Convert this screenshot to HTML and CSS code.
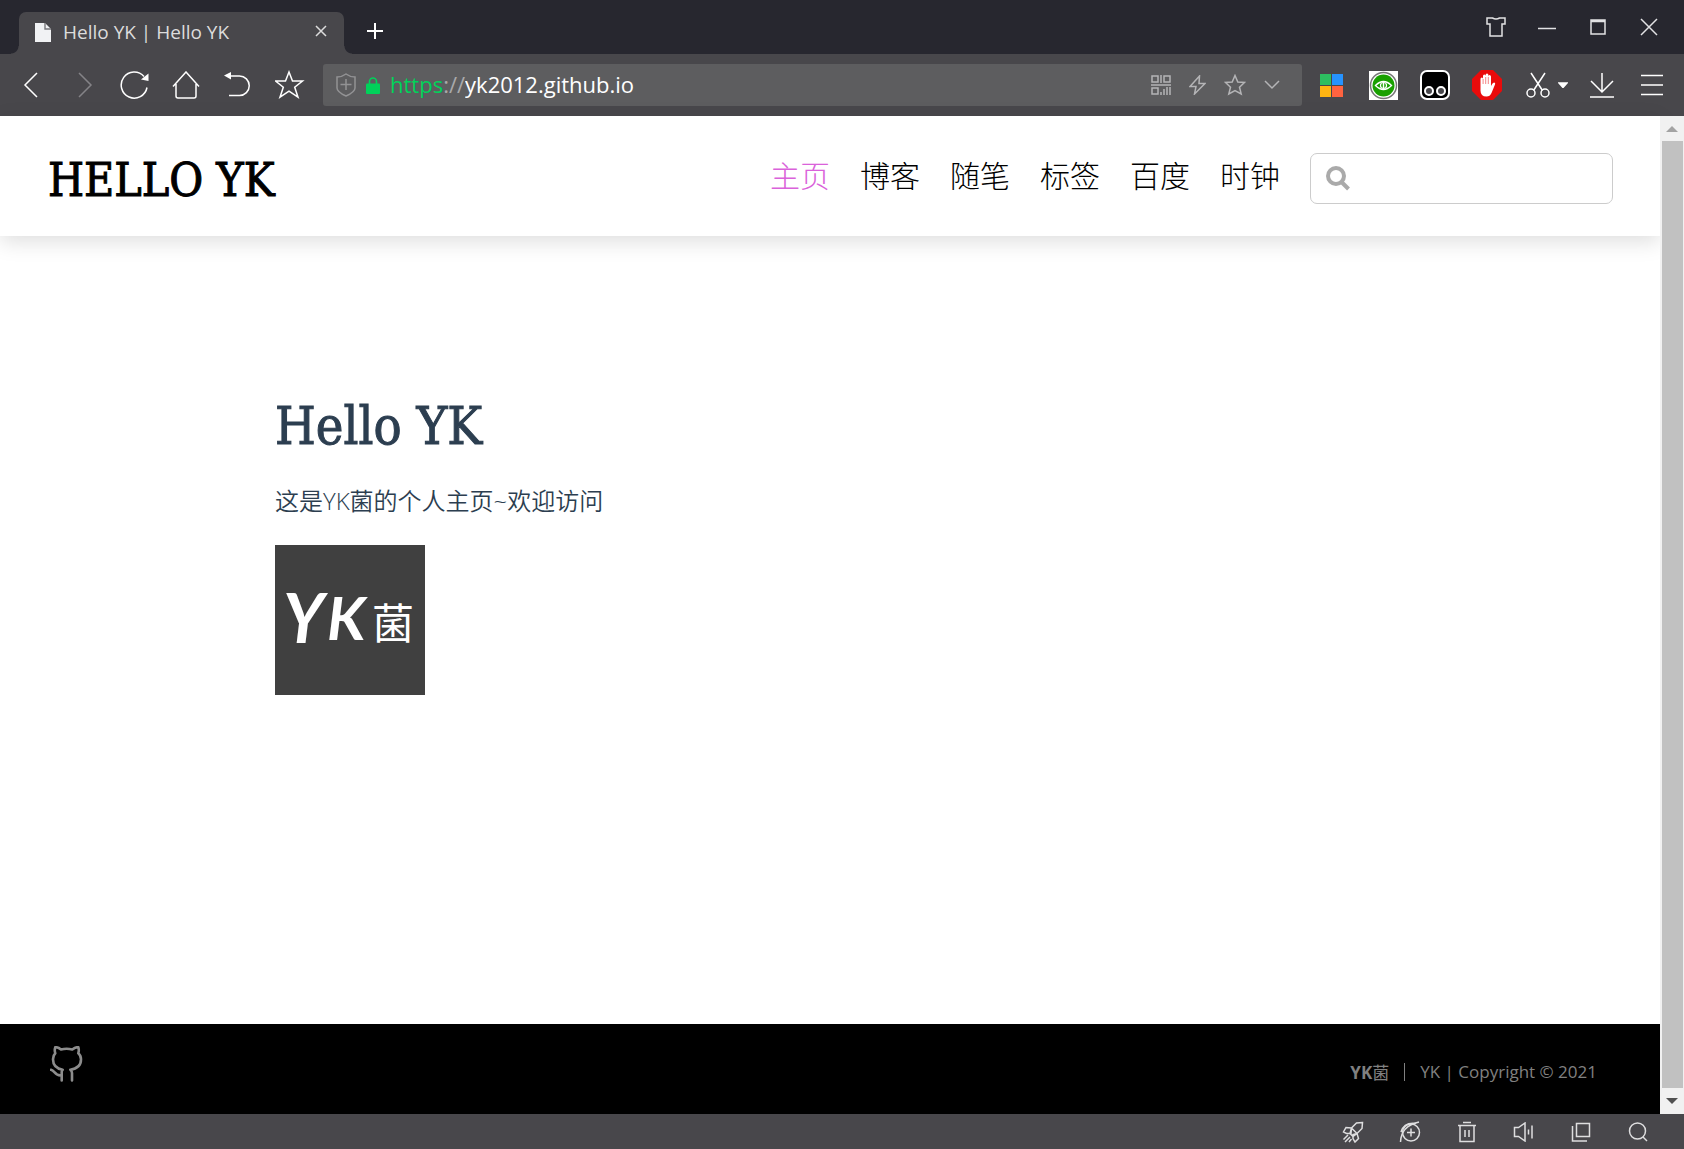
FILE: index.html
```html
<!DOCTYPE html>
<html lang="zh-CN">

<head>
    <meta charset="UTF-8">
    <meta name="viewport" content="width=device-width, initial-scale=1.0">
    <title>Hello YK | Hello YK</title>
    <link rel="stylesheet" href="styles.css">
</head>

<body>
    <!-- tab strip -->
    <div class="titlebar">
        <div class="tab">
            <svg class="tab-icon" width="16" height="20" viewBox="0 0 16 20">
                <path d="M0 0h10l6 6v13H0z" fill="#f1f2f4" />
                <path d="M10 0v6h6" fill="none" stroke="#77777b" stroke-width="1.4" />
            </svg>
            <span class="tab-title">Hello YK | Hello YK</span>
            <button class="tab-close" aria-label="Close tab">
                <svg width="12" height="12" viewBox="0 0 12 12"><path d="M1 1l10 10M11 1L1 11" /></svg>
            </button>
        </div>
        <button class="new-tab" aria-label="New tab">
            <svg width="18" height="18" viewBox="0 0 18 18"><path d="M9 1v16M1 9h16" stroke-width="2" /></svg>
        </button>
        <div class="window-btns">
            <button aria-label="Skin">
                <svg width="20" height="20" viewBox="0 0 20 20"><path d="M1 1h5.500q3.500 2 7 0H19v6h-3v12H4V7H1z" /></svg>
            </button>
            <button aria-label="Minimize">
                <svg width="18" height="18" viewBox="0 0 18 18"><path d="M0 10.500h18" /></svg>
            </button>
            <button aria-label="Maximize">
                <svg width="16" height="16" viewBox="0 0 16 16"><path d="M1 1h14v14H1zM1 2.500h14" /></svg>
            </button>
            <button aria-label="Close">
                <svg width="18" height="18" viewBox="0 0 18 18"><path d="M1 1l16 16M17 1L1 17" /></svg>
            </button>
        </div>
    </div>

    <!-- toolbar -->
    <div class="toolbar">
        <div class="nav-btns">
            <button aria-label="Back">
                <svg width="28" height="28" viewBox="0 0 28 28"><path d="M21 2L9 14l12 12" /></svg>
            </button>
            <button class="off" aria-label="Forward" disabled>
                <svg width="28" height="28" viewBox="0 0 28 28"><path d="M11 2l12 12-12 12" /></svg>
            </button>
            <button aria-label="Reload">
                <svg width="30" height="30" viewBox="0 0 30 30">
                    <path d="M28 17.500A13 13 0 1 1 25 6.500" />
                    <path d="M29.500 11V3.500L22 9.500z" fill="#fff" stroke="none" />
                </svg>
            </button>
            <button aria-label="Home">
                <svg width="28" height="28" viewBox="0 0 28 28"><path d="M1 15.500L14 1l13 14.500M4 13v12q0 2 2 2h16q2 0 2-2V13" /></svg>
            </button>
            <button aria-label="Undo">
                <svg width="28" height="28" viewBox="0 0 28 28">
                    <path d="M4 5h11.500a9.700 9.700 0 0 1 0 19.500H5" />
                    <path d="M0 4.500L7 1v7.500z" fill="#fff" stroke="none" />
                </svg>
            </button>
            <button aria-label="Favorites">
                <svg width="30" height="30" viewBox="0 0 30 30"><path d="M14 2l3.500 9h10L19.700 17.200l3.300 10-9-6-9 6 3.300-10L.5 11h10z" /></svg>
            </button>
        </div>

        <div class="urlbar">
            <svg class="shield" width="20" height="24" viewBox="0 0 20 24">
                <path d="M1 4q5 0 9-3 4 3 9 3v11q0 4-9 8-9-4-9-8zM10 6v11M4.500 11.500h11" />
            </svg>
            <svg class="lock" width="14" height="17" viewBox="0 0 14 17">
                <path d="M3.500 8V4.500a3.500 3.500 0 0 1 7 0V8" fill="none" stroke="#00d25a" stroke-width="1.600" />
                <rect y="6.500" width="14" height="10.500" rx="1" fill="#00d25a" />
            </svg>
            <label class="url-scheme" for="url"><b>https</b>://</label>
            <input id="url" class="url-input" type="text" value="yk2012.github.io">
            <button aria-label="QR code">
                <svg width="20" height="20" viewBox="0 0 20 20">
                    <path d="M1 1h6v6H1zM13 1h6v6h-6zM10 0v8M0 10h20M1 13h6v6H1zM10 17v3M13 14v6M16 12v8M19 12v8" />
                </svg>
            </button>
            <button aria-label="Speed mode">
                <svg width="17" height="20" viewBox="0 0 17 20"><path d="M10.500 1L1 11.500h6L5.500 19 16 8.500h-6z" /></svg>
            </button>
            <button aria-label="Add to favorites">
                <svg width="22" height="22" viewBox="0 0 22 22"><path d="M11 1.500l2.800 6.500 6.700.5-5 4.700 1.700 6.800-6.200-3.500L4.800 20l1.700-6.800-5-4.700 6.700-.5z" /></svg>
            </button>
            <button aria-label="Show history">
                <svg width="16" height="10" viewBox="0 0 16 10"><path d="M1 1l7 7 7-7" /></svg>
            </button>
        </div>

        <div class="extensions">
            <button aria-label="Microsoft">
                <svg width="23" height="23" viewBox="0 0 23 23">
                    <g stroke="none">
                        <path d="M0 0h11v11H0z" fill="#2dbe60" />
                        <path d="M12 0h11v11H12z" fill="#2693ff" />
                        <path d="M0 12h11v11H0z" fill="#ffb412" />
                        <path d="M12 12h11v11H12z" fill="#ff6340" />
                    </g>
                </svg>
            </button>
            <button aria-label="Eye care">
                <svg width="29" height="29" viewBox="0 0 29 29">
                    <path d="M0 0h29v29H0z" fill="#fff" stroke="none" />
                    <circle cx="14.500" cy="14.500" r="13" fill="#fff" stroke="#777" />
                    <circle cx="14.500" cy="14.500" r="11" fill="#19a000" stroke="none" />
                    <path d="M6.500 14.500q8-8 16 0-8 8-16 0z" stroke-width="1.400" />
                    <circle cx="14.500" cy="14.500" r="3" stroke-width="1.200" />
                    <path d="M14.500 12v5" />
                </svg>
            </button>
            <button aria-label="Tampermonkey">
                <svg width="30" height="30" viewBox="0 0 30 30">
                    <rect x="1" y="1" width="28" height="28" rx="6" fill="#000" stroke-width="2" />
                    <circle cx="9" cy="21" r="4" fill="#48474b" stroke-width="2" />
                    <circle cx="21" cy="21" r="4" fill="#48474b" stroke-width="2" />
                </svg>
            </button>
            <button aria-label="AdBlock">
                <svg width="30" height="30" viewBox="0 0 30 30">
                    <path d="M9 0h12l9 9v12l-9 9H9l-9-9V9z" fill="#e90b0b" stroke="none" />
                    <path d="M8.500 17V9q0-1.500 1.300-1.500T11 9V6q0-1.500 1.300-1.500T13.600 6V5q0-1.500 1.400-1.500T16.400 5v1.500q0-1.500 1.200-1.500T19 6.500V16q1.500-3.500 3-3.500 1.800 0 1 2L19.500 23q-1.500 3.500-5 3.500-6 0-6-6z" fill="#fff" stroke="none" />
                    <path d="M11.100 9v5M13.700 7v7M16.300 7v7" stroke="#e90b0b" stroke-width=".5" />
                </svg>
            </button>
        </div>
        <div class="tools">
            <button class="cut" aria-label="Screenshot">
                <svg width="24" height="26" viewBox="0 0 24 26">
                    <path d="M5 1l11.500 17.500M19 1L7.500 18.500" />
                    <circle cx="5" cy="21" r="4" />
                    <circle cx="19" cy="21" r="4" />
                </svg>
                <svg width="10" height="6" viewBox="0 0 10 6"><path d="M1 1h8L5 5.500z" fill="#fff" /></svg>
            </button>
            <button aria-label="Downloads">
                <svg width="24" height="26" viewBox="0 0 24 26"><path d="M12 1v19M1 9l11 11L23 9M0 25h24" /></svg>
            </button>
            <button aria-label="Menu">
                <svg width="22" height="22" viewBox="0 0 22 22"><path d="M0 1.500h22M0 11h22M0 20.500h22" /></svg>
            </button>
        </div>
    </div>

    <!-- web page -->
    <div class="viewport">
        <div class="page">
            <header class="header">
                <a class="logo" href="#">HELLO YK</a>
                <nav class="menu">
                    <a class="active" href="#">主页</a>
                    <a href="#">博客</a>
                    <a href="#">随笔</a>
                    <a href="#">标签</a>
                    <a href="#">百度</a>
                    <a href="#">时钟</a>
                </nav>
                <label class="search">
                    <svg width="24" height="25" viewBox="0 0 24 25">
                        <circle cx="10" cy="10" r="8" />
                        <path d="M15.500 16l7 7" />
                    </svg>
                    <input type="text" aria-label="Search">
                </label>
            </header>

            <main class="content">
                <h1>Hello YK</h1>
                <p>这是YK菌的个人主页~欢迎访问</p>
                <svg class="avatar" width="150" height="150" viewBox="0 0 150 150" role="img">
                    <rect width="150" height="150" fill="#404040" />
                    <text class="hand hand-y" x="8" y="98">Y</text>
                    <text class="hand" x="52" y="95">K</text>
                    <text class="hand-cn" x="97" y="94">菌</text>
                </svg>
            </main>

            <footer class="footer">
                <a class="github" href="#" aria-label="GitHub">
                    <svg width="34" height="36" viewBox="0 0 34 36">
                        <path d="M1 23.700C5 24.500 5 30 11 29.300" />
                        <path d="M11.700 34.500V26q0-1.500 1-2.300C8 23 3 20.500 3 13.300q0-3.800 2.300-6-1.100-3.300 0-6.100 2.700-.2 5.700 2.300 5.500-1.500 11.300 0 3.200-2.500 6-2.300 1 2.800 0 6.100 2.700 2.200 2.700 6C31 20.500 26 23 20.300 23.700q1.700 1.300 1.700 3.300v7.500" />
                    </svg>
                </a>
                <div class="copyright">
                    <a href="#"><b>YK</b>菌</a>
                    <span>YK | Copyright © 2021</span>
                </div>
            </footer>
        </div>
        <div class="scrollbar">
            <svg width="12" height="6" viewBox="0 0 12 6"><path d="M0 6l6-6 6 6z" fill="#a3a3a3" /></svg>
            <div class="thumb"></div>
            <svg width="12" height="6" viewBox="0 0 12 6"><path d="M0 0l6 6 6-6z" fill="#505050" /></svg>
        </div>
    </div>

    <!-- status bar -->
    <div class="statusbar">
        <button aria-label="Boost">
            <svg width="22" height="22" viewBox="0 0 22 22">
                <path d="M20.500 1.500l-6 .5-5 5 5.500 5.500 5-5zM9.500 7L4 6.500 1.500 11l3 1.500h4.500zM15 12.500l1.500 5L13 21l-2-3.500v-4zM9.500 7L8 12.500l3 3 4-3M6 14l-4.500 4.500M8 16l-5 5M9.500 18L7 21" />
            </svg>
        </button>
        <button aria-label="Compatibility mode">
            <svg width="22" height="22" viewBox="0 0 22 22">
                <circle cx="12" cy="11.500" r="8.500" />
                <path d="M1.500 21Q2 5 20 1M2 11Q5 1 17 2.500M12 7.500v8M8 11.500h8" />
            </svg>
        </button>
        <button aria-label="Clear">
            <svg width="20" height="22" viewBox="0 0 20 22"><path d="M6 1.500h8M1 4.500h18M3 5v15.500h14V5M8 9v7M12 9v7" /></svg>
        </button>
        <button aria-label="Sound">
            <svg width="22" height="20" viewBox="0 0 22 20"><path d="M1.500 5.500h4L12 1v18l-6.500-4.500h-4zM15.500 7.500v5M19 3.500v13" /></svg>
        </button>
        <button aria-label="Windows">
            <svg width="20" height="20" viewBox="0 0 20 20"><path d="M5.500 1.500h13v13h-13zM1.500 4v15H16" /></svg>
        </button>
        <button aria-label="Zoom">
            <svg width="20" height="22" viewBox="0 0 20 22"><circle cx="9.500" cy="10" r="8" /><path d="M15 16l4 4" /></svg>
        </button>
    </div>
</body>

</html>
```
FILE: styles.css
```css
* {
    box-sizing: border-box;
}

body {
    margin: 0;
    min-height: 100vh;
    display: flex;
    flex-direction: column;
    background: #48474b;
    font-family: "Open Sans", "Noto Sans CJK SC", sans-serif;
}

button {
    display: flex;
    align-items: center;
    justify-content: center;
    padding: 0;
    border: none;
    background: none;
}

button svg {
    fill: none;
    stroke: #fff;
    stroke-width: 1.5;
}

input {
    border: none;
    outline: none;
    background: none;
    padding: 0;
    min-width: 0;
}

a {
    color: inherit;
    text-decoration: none;
}

/* tab strip */
.titlebar {
    display: flex;
    align-items: flex-end;
    height: 54px;
    padding: 0 10px 0 19px;
    background: #27272f;
}

.tab {
    position: relative;
    display: flex;
    align-items: center;
    width: 325px;
    height: 42px;
    padding: 0 17px 0 16px;
    border-radius: 7px 7px 0 0;
    background: #48474b;
}

/* rounded feet of the tab */
.tab::before,
.tab::after {
    content: '';
    position: absolute;
    bottom: 0;
    width: 8px;
    height: 8px;
}

.tab::before {
    left: -8px;
    background: radial-gradient(circle at 0 0, #27272f 7px, #48474b 8px);
}

.tab::after {
    right: -8px;
    background: radial-gradient(circle at 100% 0, #27272f 7px, #48474b 8px);
}

.tab-title {
    flex: 1;
    margin-left: 12px;
    padding-bottom: 2px;
    font-size: 19px;
    line-height: 24px;
    color: #dcdcdc;
}

.tab-close {
    padding-bottom: 5px;
}

.tab-close svg {
    stroke: #dcdcdc;
}

.new-tab {
    width: 61px;
    height: 46px;
}

.window-btns {
    display: flex;
    align-self: stretch;
    margin-left: auto;
}

.window-btns button {
    width: 51px;
}

.window-btns svg {
    stroke: #e2e2e4;
}

/* toolbar */
.toolbar {
    display: flex;
    align-items: center;
    height: 62px;
    padding: 0 7px 0 4px;
}

.nav-btns,
.extensions,
.tools {
    display: flex;
}

.nav-btns button {
    width: 52px;
    height: 40px;
}

.nav-btns .off svg {
    stroke: #848387;
}

.urlbar {
    flex: 1;
    display: flex;
    align-items: center;
    height: 42px;
    margin: 0 3px 0 7px;
    padding: 0 12px 0 13px;
    border-radius: 3px;
    background: #5d5d5f;
    font-size: 22px;
}

.shield {
    fill: none;
    stroke: #929294;
    stroke-width: 1.5;
}

.lock {
    margin: 0 10px 0 10px;
}

.url-scheme {
    padding-bottom: 2px;
    color: #a9a9ab;
}

.url-scheme b {
    font-weight: 400;
    color: #00d25a;
}

.url-input {
    flex: 1;
    padding-bottom: 2px;
    font: inherit;
    color: #fff;
}

.urlbar button {
    width: 37px;
    height: 40px;
}

.urlbar button svg {
    stroke: #b4b4b6;
}

.extensions button {
    width: 52px;
    height: 40px;
}

.tools button {
    width: 50px;
    height: 40px;
}

.tools .cut {
    width: 64px;
    padding-left: 4px;
    gap: 8px;
}

/* web page */
.viewport {
    flex: 1;
    display: flex;
}

.page {
    flex: 1;
    display: flex;
    flex-direction: column;
    background: #fff;
}

.header {
    display: flex;
    align-items: center;
    height: 120px;
    padding: 0 47px 0 48px;
    box-shadow: 0 6px 20px rgba(0, 0, 0, 0.13);
}

.logo,
.content h1 {
    font-family: "DejaVu Serif Condensed", "DejaVu Serif", serif;
    font-weight: 400;
    -webkit-text-stroke: 1px currentColor;
}

.logo {
    margin-right: auto;
    padding-top: 8px;
    font-size: 46px;
    line-height: 60px;
    color: #000;
}

.menu {
    display: flex;
    gap: 30px;
    margin-right: 30px;
    padding-bottom: 4px;
    font-family: "Noto Sans CJK SC", sans-serif;
    font-size: 30px;
    font-weight: 300;
    line-height: 44px;
    color: #000;
}

.menu .active {
    color: #da62da;
}

.search {
    display: flex;
    align-items: center;
    width: 303px;
    height: 51px;
    margin-top: 5px;
    padding: 0 15px;
    border: 1px solid #ccc;
    border-radius: 7px;
}

.search svg {
    fill: none;
    stroke: #aaa;
    stroke-width: 4;
}

.search input {
    flex: 1;
    margin-left: 10px;
    font-size: 22px;
}

.content {
    flex: 1;
    padding: 155px 48px 48px 275px;
    color: #2c3e50;
}

.content h1 {
    margin: 0;
    font-size: 52px;
    line-height: 70px;
}

.content p {
    margin: 21px 0 26px;
    font-size: 24px;
    font-weight: 350;
    line-height: 37px;
}

.avatar {
    display: block;
}

.hand {
    font-family: Lato, sans-serif;
    font-size: 60px;
    font-style: italic;
    font-weight: 700;
    fill: #fff;
}

.hand-y {
    font-size: 68px;
}

.hand-cn {
    font-family: "Noto Sans CJK SC", sans-serif;
    font-size: 42px;
    fill: #fff;
}

.footer {
    display: flex;
    justify-content: space-between;
    height: 90px;
    padding: 22px 63px 0 50px;
    background: #000;
    color: #808080;
}

.github svg {
    fill: none;
    stroke: #8c8c8c;
    stroke-width: 2.6;
    stroke-linecap: round;
    stroke-linejoin: round;
}

.copyright {
    display: flex;
    align-items: center;
    height: 50px;
    font-size: 17px;
}

.copyright a::after {
    content: '';
    display: inline-block;
    height: 18px;
    margin: 0 15px;
    border-left: 1px solid #808080;
    vertical-align: -2px;
}

.scrollbar {
    display: flex;
    flex-direction: column;
    align-items: center;
    width: 24px;
    padding: 10px 1px;
    background: #f1f1f1;
}

.thumb {
    flex: 1;
    align-self: stretch;
    margin: 9px 0 10px 1px;
    background: #c1c1c1;
}

/* status bar */
.statusbar {
    display: flex;
    justify-content: flex-end;
    height: 35px;
    padding-right: 18px;
}

.statusbar button {
    width: 57px;
}

.statusbar svg {
    stroke: #dededf;
}
```
